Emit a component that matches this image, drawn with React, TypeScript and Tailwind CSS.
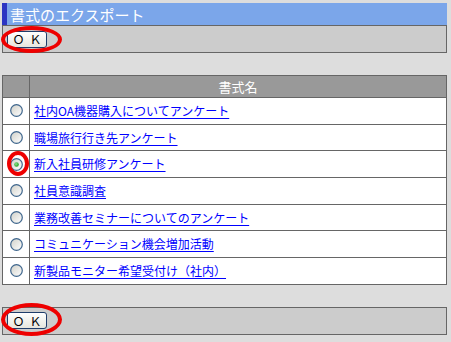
import type { ReactNode } from "react";

const forms = [
  "社内OA機器購入についてアンケート",
  "職場旅行行き先アンケート",
  "新入社員研修アンケート",
  "社員意識調査",
  "業務改善セミナーについてのアンケート",
  "コミュニケーション機会増加活動",
  "新製品モニター希望受付け（社内）",
];

const selected = 2;

const font = { fontFamily: '"Noto Sans CJK JP", "Liberation Sans", sans-serif' };

export default function App() {
  return (
    <div className="h-[342px] w-[451px] overflow-hidden bg-[#dddddd] pl-[2px] pr-[4px] pt-[3px]" style={font}>
      <div className="flex h-[22px] items-center border-l-[5px] border-[#2b35c2] bg-[#7ba6ea] pl-[3px] text-[15px] leading-none text-white">
        書式のエクスポート
      </div>
      <ButtonBar>
        <OkButton />
        <Ring className="left-[-6px] top-[-5px] h-[27px] w-[61px]" />
      </ButtonBar>

      <table className="mt-[22px] w-full border-collapse border border-[#666666] bg-white text-[12px]">
        <thead>
          <tr className="h-[22px] bg-[#999999]">
            <th className="w-[27px] border border-[#666666] p-0" />
            <th className="border border-[#666666] p-0 text-[13px] font-normal leading-none text-white">書式名</th>
          </tr>
        </thead>
        <tbody>
          {forms.map((name, index) => (
            <tr key={name} className="h-[26.7px]">
              <td className="relative border border-[#666666] p-0">
                <div className="flex justify-center pl-[1px]">
                  <Radio checked={index === selected} />
                </div>
                {index === selected && <Ring className="left-[4px] top-[0px] h-[25px] w-[22px]" />}
              </td>
              <td className="border border-[#666666] py-0 pl-[4px] leading-none">
                <a href="#" className="text-[#0000ff] underline underline-offset-[2px]">
                  {name}
                </a>
              </td>
            </tr>
          ))}
        </tbody>
      </table>

      <div className="mt-[22px]">
        <ButtonBar>
          <OkButton />
          <Ring className="left-[-6px] top-[-9px] h-[33px] w-[61px]" />
        </ButtonBar>
      </div>
    </div>
  );
}

function ButtonBar({ children }: { children: ReactNode }) {
  return (
    <div className="flex h-[28px] items-center border border-[#666666] bg-[#cccccc] pl-[4px]">
      <div className="relative">{children}</div>
    </div>
  );
}

function OkButton() {
  return (
    <button className="flex h-[17px] w-[40px] items-center justify-center gap-[5px] rounded-[3px] border border-[#1f3d6b] bg-gradient-to-b from-white to-[#e6e6de] text-[12px] leading-none text-black">
      <span>Ｏ</span>
      <span>Ｋ</span>
    </button>
  );
}

function Ring({ className }: { className: string }) {
  return <div className={`pointer-events-none absolute rounded-[50%] border-[4px] border-[#ee0000] ${className}`} />;
}

function Radio({ checked }: { checked: boolean }) {
  return (
    <svg width="13" height="13" viewBox="0 0 13 13">
      <defs>
        <linearGradient id="rg" x1="0" y1="0" x2="1" y2="1">
          <stop offset="0" stopColor="#d0d0c8" />
          <stop offset="1" stopColor="#ffffff" />
        </linearGradient>
        <radialGradient id="gd" cx="0.4" cy="0.4" r="0.6">
          <stop offset="0" stopColor="#8fe08f" />
          <stop offset="1" stopColor="#21a121" />
        </radialGradient>
      </defs>
      <circle cx="6.5" cy="6.5" r="5.8" fill="url(#rg)" stroke="#3f668d" strokeWidth="1.2" />
      {checked && <circle cx="6.5" cy="6.5" r="2.3" fill="url(#gd)" />}
    </svg>
  );
}
